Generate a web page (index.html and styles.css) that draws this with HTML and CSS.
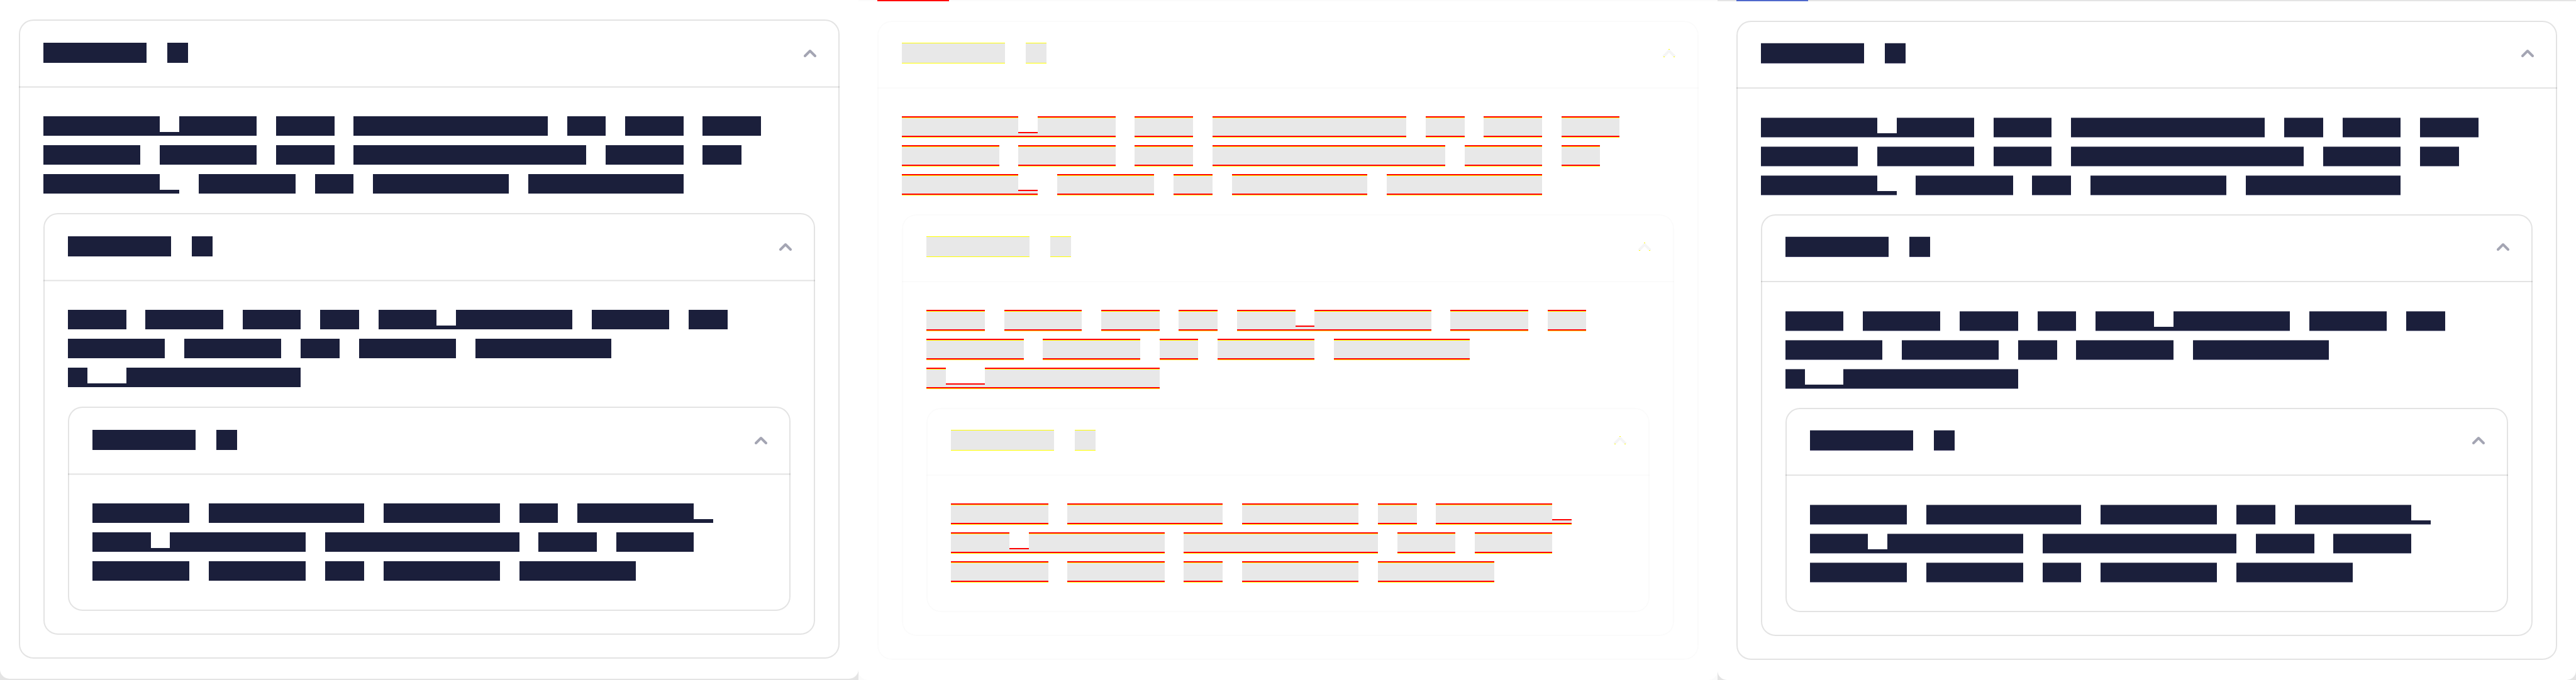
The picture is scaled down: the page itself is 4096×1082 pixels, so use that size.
FILE: index.html
```
<!DOCTYPE html>
<html lang="en">
<head>
<meta charset="utf-8">
<title>Nested panels</title>
<link rel="stylesheet" href="styles.css">
</head>
<body>
<main class="compare">
  <section class="pane pane-before"><div class="sheet"><div class="stack"></div></div></section>
  <section class="pane pane-diff"><div class="strip"><span class="strip-mark"></span></div><div class="sheet"><div class="stack"></div></div></section>
  <section class="pane pane-after"><div class="strip"><span class="strip-mark"></span></div><div class="sheet"><div class="stack"></div></div></section>
</main>
<script src="panels.js"></script>
</body>
</html>
```
FILE: panels.js
```
// Each line of block glyphs: X is a full block, p a descender-only block.
const levels = [
  { columns: 37, lines: [
    'XXXXXXpXXXX XXX XXXXXXXXXX XX XXX XXX',
    'XXXXX XXXXX XXX XXXXXXXXXXXX XXXX XX',
    'XXXXXXp XXXXX XX XXXXXXX XXXXXXXX'] },
  { columns: 34, lines: [
    'XXX XXXX XXX XX XXXpXXXXXX XXXX XX',
    'XXXXX XXXXX XX XXXXX XXXXXXX',
    'XppXXXXXXXXX'] },
  { columns: 32, lines: [
    'XXXXX XXXXXXXX XXXXXX XX XXXXXXp',
    'XXXpXXXXXXX XXXXXXXXXX XXX XXXX',
    'XXXXX XXXXX XX XXXXXX XXXXXX'] }
];

function lineMarkup(line) {
  const runs = [...line.matchAll(/X+|p+/g)].map(m =>
    `<span class="${m[0][0] === 'p' ? 'low' : 'block'}" style="grid-column:${m.index + 1} / span ${m[0].length}"></span>`);
  return `<div class="line">${runs.join('')}</div>`;
}

function panelMarkup(depth) {
  if (depth === levels.length) return '';
  const level = levels[depth];
  return `<article class="card">
    <button class="card-head" type="button" aria-expanded="true" aria-label="Toggle panel">
      <span class="title"><span class="block title-word"></span><span class="block title-mark"></span></span>
      <svg class="chevron" viewBox="0 0 20 13" aria-hidden="true"><path d="M2 11 10 3 18 11"/><path class="tips" d="M9 .5h2M1 12.5h2M17 12.5h2"/></svg>
    </button>
    <div class="divider"></div>
    <div class="card-body">
      <div class="copy copy-${level.columns}">${level.lines.map(lineMarkup).join('')}</div>
      ${panelMarkup(depth + 1)}
    </div>
  </article>`;
}

document.querySelectorAll('.stack').forEach(stack => { stack.innerHTML = panelMarkup(0); });
```
FILE: styles.css
```
* { box-sizing: border-box; }

body {
  margin: 0;
  background: #fff;
  font-family: "Liberation Sans", sans-serif;
}

.compare {
  display: grid;
  grid-template-columns: repeat(3, 1fr);
  min-height: 100vh;
}

.pane {
  --line: rgba(0, 0, 0, 0.11);
  --ink: #1b1f3b;
  --row: 32px;
  --row-gap: 14px;
  --lead: 46px;
  --title: 33px;
  --nest: 30px;
  --tail: 45px;
  display: flex;
  flex-direction: column;
  background: #e4e4e4;
}

.pane-before {
  --row: 31px;
  --row-gap: 15px;
  --lead: 45px;
  --title: 32px;
  --nest: 31px;
  --tail: 46px;
  padding-bottom: 2px;
}

.pane-diff {
  --line: rgba(0, 0, 0, 0.015);
  --row: 34px;
  --row-gap: 12px;
  --lead: 44px;
  background: #fbfbfb;
}

.strip {
  height: 2px;
  padding-left: 30px;
  background: #e4e4e4;
}

.pane-diff .strip { background: #fbfbfb; }

.strip-mark {
  display: block;
  width: 114px;
  height: 2px;
  background: #4f68cc;
}

.pane-diff .strip-mark { background: #f00; }

.sheet {
  flex: 1;
  padding: 31px 30px;
  background: #fff;
  border-radius: 0 0 15px 15px;
}

.card {
  border: 2px solid var(--line);
  border-radius: 23px;
}

.card-head {
  display: flex;
  align-items: center;
  justify-content: space-between;
  width: calc(100% + 4px);
  height: 104px;
  margin: 0 -2px;
  padding: 0 37px 5px 39px;
  border: 0;
  background: none;
  font: inherit;
}

.pane-before .card-head { padding-bottom: 2px; }

.title {
  display: flex;
  gap: 33px;
  height: var(--title);
}

.title-word { width: 164px; }
.title-mark { width: 33px; }

.chevron {
  width: 20px;
  height: 13px;
  fill: none;
  stroke: #a4a5b3;
  stroke-width: 4;
  stroke-linecap: round;
  stroke-linejoin: round;
}

.tips { display: none; }

.pane-diff .chevron { stroke: #f5f5f5; }

.pane-diff .tips {
  display: inline;
  stroke: #ff0;
  stroke-width: 1;
  stroke-linecap: butt;
}

.divider {
  height: 2px;
  margin: 0 -2px;
  background: var(--line);
}

.pane-before .divider {
  height: 3px;
  background: linear-gradient(#0001 0 1px, #0000001c 1px 2px, #0000000c 2px);
}

.card-body { padding: var(--lead) 37px 36px; }

.card .card .card .card-body { padding-bottom: var(--tail); }

.copy {
  display: grid;
  gap: var(--row-gap);
}

.copy-37 { --columns: 37; max-width: 1141px; }
.copy-34 { --columns: 34; max-width: 1049px; }
.copy-32 { --columns: 32; max-width: 987px; }

.copy + .card { margin-top: var(--nest); }

.line {
  display: grid;
  grid-template-columns: repeat(var(--columns), 1fr);
  height: var(--row);
}

.block,
.low { background: var(--ink); }

.low {
  align-self: end;
  height: 6px;
}

.pane-diff .block,
.pane-diff .low {
  background: linear-gradient(#f00 0 2px, #ff0 2px 3px, #e8e8e8 3px calc(100% - 3px), #f00 calc(100% - 3px) calc(100% - 1px), #ff0 calc(100% - 1px));
}

.pane-diff .low {
  height: 9px;
  background: linear-gradient(#f00 0 2px, #e8e8e8 2px 6px, #f00 6px 8px, #ff0 8px);
}

.pane-diff .title .block {
  background: linear-gradient(#ff0 0 1px, #e8e8e8 1px calc(100% - 1px), #ff0 calc(100% - 1px));
}

.pane-after .block {
  background: linear-gradient(#777888 0 1px, var(--ink) 1px calc(100% - 1px), #9698ad calc(100% - 1px));
}

.pane-after .low {
  height: 7px;
  background: linear-gradient(var(--ink) 0 6px, #9698ad 6px);
}

.pane-after .title .block {
  background: linear-gradient(#c8cad0 0 1px, var(--ink) 1px calc(100% - 1px), #47466a calc(100% - 1px));
}
```
